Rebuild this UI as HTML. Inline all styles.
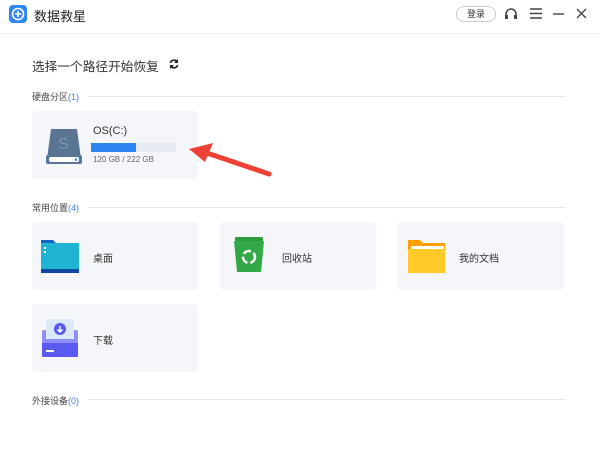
<!DOCTYPE html><html><head><meta charset="utf-8"><style>
body{margin:0;width:600px;height:459px;background:#fff;font-family:"Liberation Sans","Noto Sans CJK SC",sans-serif;position:relative;overflow:hidden;color:#333}
.a{position:absolute}
.card{position:absolute;background:#f5f6fa;border-radius:3px}
.sec{position:absolute;left:32px;font-size:9px;color:#444}
.sec b{font-weight:normal;color:#3a7ff0}
.line{position:absolute;height:1px;background:#e8e8ec}
.lbl{position:absolute;font-size:10px;color:#333}
</style></head><body>
<svg class="a" style="left:9px;top:5px" width="18" height="18"><rect width="18" height="18" rx="4" fill="#2f86f6"/><circle cx="9" cy="9" r="5.5" fill="none" stroke="#fff" stroke-width="1.6"/><path d="M9 6v6M6 9h6" stroke="#fff" stroke-width="1.6"/></svg>
<div class="a" style="left:34px;top:6px;font-size:13px;color:#222">数据救星</div>
<div class="a" style="left:456px;top:6px;width:38px;height:14px;border:1px solid #ccc;border-radius:8px;font-size:9px;text-align:center;line-height:14px">登录</div>
<svg class="a" style="left:503px;top:6px" width="92" height="16"><path d="M3 11V8a5 5 0 0 1 10 0v3" fill="none" stroke="#444" stroke-width="1.5"/><rect x="2" y="9" width="3" height="4" fill="#444"/><rect x="11" y="9" width="3" height="4" fill="#444"/><path d="M27 3h12M27 7.5h12M27 12h12" stroke="#444" stroke-width="1.4"/><path d="M50 8h11" stroke="#444" stroke-width="1.4"/><path d="M74 3l9 9M83 3l-9 9" stroke="#444" stroke-width="1.4"/></svg>
<div class="line" style="left:0;top:33px;width:600px;background:#eee"></div>
<div class="a" style="left:32px;top:56px;font-size:12.7px;color:#333">选择一个路径开始恢复</div>
<svg class="a" style="left:168px;top:58px" width="12" height="12"><path d="M9.5 4A4 4 0 0 0 2.3 5M2.5 8a4 4 0 0 0 7.2 -1" fill="none" stroke="#222" stroke-width="1.6"/><path d="M10 1v4H6z" fill="#222"/><path d="M2 11V7h4z" fill="#222"/></svg>
<div class="sec" style="top:90px">硬盘分区<b>(1)</b></div><div class="line" style="left:88px;top:96px;width:478px"></div>
<div class="card" style="left:32px;top:111px;width:166px;height:68px"></div>
<svg class="a" style="left:45px;top:127px" width="38" height="38"><path d="M6 2h26l4 30H2z" fill="#5a7594"/><rect x="1" y="28" width="36" height="9" rx="2" fill="#5a7594"/><rect x="4" y="30" width="30" height="5" rx="2" fill="#fff"/><circle cx="31" cy="32.5" r="1.3" fill="#2f86f6"/><text x="13" y="22" font-size="16" fill="#7d93ad" font-family="Liberation Sans">S</text></svg>
<div class="a" style="left:93px;top:125px;font-size:11px">OS(C:)</div>
<div class="a" style="left:91px;top:143px;width:85px;height:9px;background:#e6e9f0"></div>
<div class="a" style="left:91px;top:143px;width:45px;height:9px;background:#2e86f2"></div>
<div class="a" style="left:93px;top:155px;font-size:8px;color:#666">120 GB / 222 GB</div>
<svg class="a" style="left:185px;top:140px" width="90" height="40"><path d="M84 34L22 13" stroke="#ee4136" stroke-width="5" stroke-linecap="round"/><path d="M4 9L28 3 20 22z" fill="#ee4136"/></svg>
<div class="sec" style="top:201px">常用位置<b>(4)</b></div><div class="line" style="left:88px;top:207px;width:478px"></div>
<div class="card" style="left:32px;top:222px;width:166px;height:68px"></div>
<div class="card" style="left:220px;top:222px;width:156px;height:68px"></div>
<div class="card" style="left:397px;top:222px;width:167px;height:68px"></div>
<div class="card" style="left:32px;top:304px;width:166px;height:68px"></div>
<svg class="a" style="left:41px;top:238px" width="44" height="36"><path d="M0 2h12l3 3h0v3H0z" fill="#1565c0"/><rect x="0" y="5" width="38" height="30" rx="1" fill="#1fb4d4"/><rect x="0" y="31" width="38" height="4" fill="#0d47a1"/><rect x="3" y="9" width="2" height="2" fill="#fff"/><rect x="3" y="13" width="2" height="2" fill="#fff"/></svg>
<div class="lbl" style="left:93px;top:250px">桌面</div>
<svg class="a" style="left:231px;top:236px" width="38" height="40"><rect x="4" y="1" width="28" height="4" rx="1" fill="#2e9a3c"/><path d="M3 5h30l-3 31H6z" fill="#32a846"/><circle cx="18" cy="21" r="6" fill="none" stroke="#fff" stroke-width="2.5" stroke-dasharray="8 3"/></svg>
<div class="lbl" style="left:282px;top:250px">回收站</div>
<svg class="a" style="left:408px;top:238px" width="42" height="36"><path d="M0 2h12l3 3h22v30H0z" fill="#ffa000"/><rect x="3" y="8" width="33" height="3" fill="#fff"/><rect x="0" y="11" width="37" height="24" rx="1" fill="#ffca28"/></svg>
<div class="lbl" style="left:459px;top:250px">我的文档</div>
<svg class="a" style="left:42px;top:319px" width="40" height="40"><rect x="0" y="11" width="36" height="27" rx="2" fill="#8e8ef8"/><rect x="4" y="0" width="28" height="20" fill="#dbe9fb"/><rect x="0" y="24" width="36" height="14" rx="1" fill="#5a5af0"/><rect x="4" y="31" width="8" height="2" fill="#fff"/><circle cx="18" cy="10" r="6" fill="#5a5af0"/><path d="M18 7v6M15.5 10.5l2.5 2.5 2.5-2.5" stroke="#fff" stroke-width="1.5" fill="none"/></svg>
<div class="lbl" style="left:93px;top:332px">下载</div>
<div class="sec" style="top:394px">外接设备<b>(0)</b></div><div class="line" style="left:88px;top:399px;width:478px"></div>
</body></html>
